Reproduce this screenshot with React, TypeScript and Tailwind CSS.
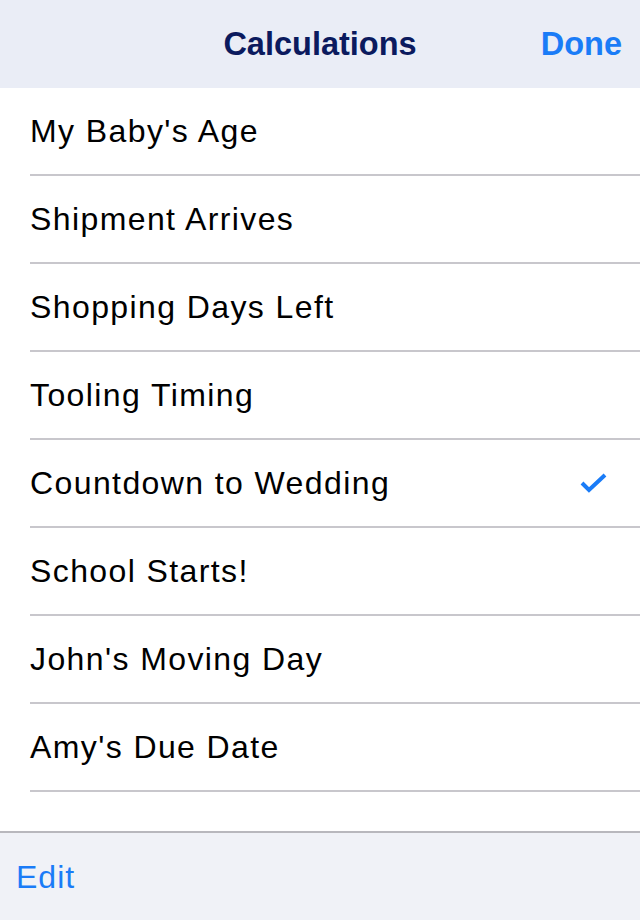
import React from "react";

const items = [
  "My Baby's Age",
  "Shipment Arrives",
  "Shopping Days Left",
  "Tooling Timing",
  "Countdown to Wedding",
  "School Starts!",
  "John's Moving Day",
  "Amy's Due Date",
];

export default function App() {
  return (
    <div
      className="w-[640px] h-[920px] flex flex-col bg-white overflow-hidden"
      style={{ fontFamily: '"Liberation Sans", Arial, sans-serif' }}
    >
      <div className="h-[88px] shrink-0 bg-[#eaedf6] relative flex items-center justify-center">
        <span className="text-[32.5px] font-bold text-[#0b1a5e]">Calculations</span>
        <span className="absolute right-[18px] top-0 h-full flex items-center text-[32.5px] font-bold text-[#1a7cf7]">
          Done
        </span>
      </div>
      <div className="flex-1 flex flex-col">
        {items.map((t, i) => (
          <div key={t} className="h-[88px] pl-[30px] flex shrink-0">
            <div className="flex-1 flex items-center justify-between border-b-2 border-[#c8c7cc] pr-[32px]">
              <span className="text-[32px] tracking-[1.4px] text-black leading-none -mt-[1px]">{t}</span>
              {i === 4 && (
                <svg width="28" height="22" viewBox="0 0 28 22" className="mt-[2px]">
                  <path
                    d="M2 10 L9 17 L25 2"
                    fill="none"
                    stroke="#1a7cf7"
                    strokeWidth="4"
                  />
                </svg>
              )}
            </div>
          </div>
        ))}
      </div>
      <div className="h-[89px] shrink-0 bg-[#f0f2f7] border-t-2 border-[#b8b8bd] flex items-center pl-[16px]">
        <span className="text-[32px] tracking-[1px] text-[#1a7cf7]">Edit</span>
      </div>
    </div>
  );
}
